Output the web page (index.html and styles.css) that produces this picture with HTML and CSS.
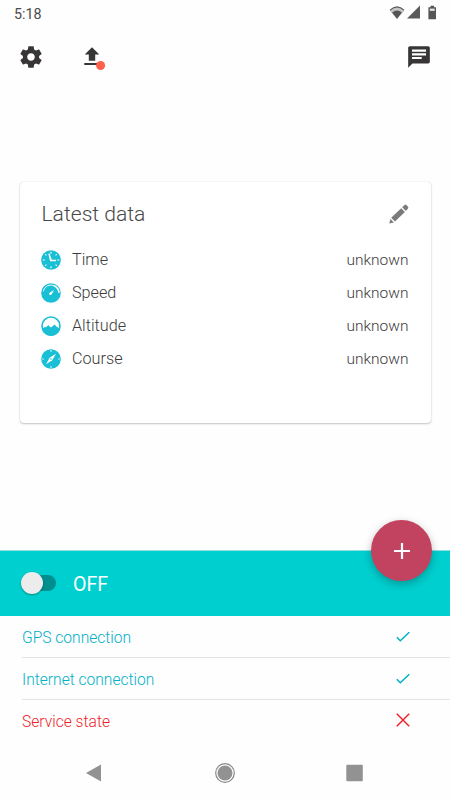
FILE: index.html
```html
<!DOCTYPE html>
<html lang="en">
<head>
<meta charset="utf-8">
<meta name="viewport" content="width=device-width, initial-scale=1">
<title>Tracker</title>
<link rel="stylesheet" href="styles.css">
</head>
<body>
<div class="screen">
  <header class="status">
    <span class="clock">5:18</span>
    <svg class="status-icons" width="50" height="16" viewBox="0 0 50 16">
      <path d="M.6 5.4Q8 -1.9 15.4 5.4L8 14.3Z" fill="#c4c4c4"/>
      <path d="M1 5.2Q8 -1.6 15 5.2" fill="none" stroke="#555" stroke-width="1.1"/>
      <path d="M3.1 7.4Q8 3.5 12.9 7.4L8 13.7Z" fill="#555"/>
      <path d="M18 13.4L31 .6V13.4Z" fill="#5a5a5a"/>
      <path d="M41.5 .8h3.6v1.5h1.9v11.9h-7.6V2.3h2.1z" fill="#555"/>
      <path d="M40.8 3.6h4.9v2.3h-4.9z" fill="#e4e4e4"/>
    </svg>
  </header>
  <nav class="toolbar">
    <svg class="gear" width="26" height="26" viewBox="0 0 24 24"><path fill="#373536" d="M19.43 12.98c.04-.32.07-.64.07-.98s-.03-.66-.07-.98l2.11-1.65c.19-.15.24-.42.12-.64l-2-3.46c-.12-.22-.39-.3-.61-.22l-2.49 1c-.52-.4-1.08-.73-1.69-.98l-.38-2.65C14.46 2.18 14.25 2 14 2h-4c-.25 0-.46.18-.49.42l-.38 2.65c-.61.25-1.17.59-1.69.98l-2.49-1c-.23-.09-.49 0-.61.22l-2 3.46c-.13.22-.07.49.12.64l2.11 1.65c-.04.32-.07.65-.07.98s.03.66.07.98l-2.11 1.65c-.19.15-.24.42-.12.64l2 3.46c.12.22.39.3.61.22l2.49-1c.52.4 1.08.73 1.69.98l.38 2.65c.03.24.24.42.49.42h4c.25 0 .46-.18.49-.42l.38-2.65c.61-.25 1.17-.59 1.69-.98l2.49 1c.23.09.49 0 .61-.22l2-3.46c.12-.22.07-.49-.12-.64l-2.11-1.65zM12 15.5c-1.93 0-3.5-1.57-3.5-3.5s1.57-3.5 3.5-3.5 3.5 1.57 3.5 3.5-1.57 3.5-3.5 3.5z"/></svg>
    <svg class="upload" width="24" height="26" viewBox="0 0 24 26"><path fill="#373536" d="M10 3.2l7.3 7.2h-4.1v6.4H6.8v-6.4H2.7zM2.3 19h15.4v2H2.3z"/><circle cx="18.6" cy="21.5" r="4.5" fill="#ff604c"/></svg>
    <svg class="chat" width="26" height="26" viewBox="0 0 24 24"><path fill="#373536" d="M20.400 2H3.600C2.700 2 2 2.700 2 3.600V22l4-4h14.400c.9 0 1.600-.7 1.600-1.600V3.600c0-.9-.7-1.600-1.600-1.600z"/><path fill="#fff" d="M5.500 5h13v2.100h-13zM5.500 8.500h13v2h-13zM5.500 11.900h9v2h-9z"/></svg>
  </nav>
  <section class="card">
    <div class="card-head">
      <h1>Latest data</h1>
      <svg width="20" height="20" viewBox="0 0 20 20" fill="#7b7b7b"><path d="M.3 19.500l1-4.600 3.600 3.600zM2.200 13.700L12.200 4.300l3.700 3.700-9.900 9.500zM13.200 3.300L15.500 1q.9-.8 1.800 0l1.700 1.700q.8.900 0 1.800L16.900 7z"/></svg>
    </div>
    <ul class="data">
      <li>
        <svg width="20" height="20" viewBox="0 0 20 20"><circle cx="10" cy="10" r="9.800" fill="#18bfd5"/><path d="M10 1.800v2M10 16.200v2M1.800 10h2M16.200 10h2M4.200 4.200l1.200 1.200M14.600 14.600l1.200 1.200M15.800 4.200l-1.200 1.200M5.400 14.600l-1.200 1.200" stroke="#fff" stroke-width="1.100"/><path d="M7.300 3.800L9.100 11.200H15V9.700H10.800L8.600 3.600Z" fill="#fff"/></svg>
        <span>Time</span><b>unknown</b>
      </li>
      <li>
        <svg width="20" height="20" viewBox="0 0 20 20"><circle cx="10" cy="10" r="9.800" fill="#18bfd5"/><path d="M2.200 8.400A8 8 0 0 1 13.500 2.800" fill="none" stroke="#fff" stroke-width=".9"/><path d="M13 2.800A8 8 0 0 1 18 9.800" fill="none" stroke="#fff" stroke-width="1.700"/><path d="M13 7L10.900 11.100A1.400 1.400 0 1 1 9 9.400Z" fill="#fff"/></svg>
        <span>Speed</span><b>unknown</b>
      </li>
      <li>
        <svg width="20" height="20" viewBox="0 0 20 20"><circle cx="10" cy="10" r="9" fill="#fff" stroke="#18bfd5" stroke-width="1.600"/><path d="M1 13L3.800 11l1.300.3L7.300 8.900l1.200 1.500L10 11.600 13.700 8.500l1.600 2 1 .4L19 13A9.300 9.300 0 0 1 1 13Z" fill="#18bfd5"/></svg>
        <span>Altitude</span><b>unknown</b>
      </li>
      <li>
        <svg width="20" height="20" viewBox="0 0 20 20"><circle cx="10" cy="10" r="9.800" fill="#18bfd5"/><path d="M10 1.200v1.500M10 17.300v1.500M1.200 10h1.500M17.300 10h1.500" stroke="#fff" stroke-width="1.100"/><path d="M15 4.800L11.200 11.300 5 15.300 8.600 8.700Z" fill="#fff"/><circle cx="10" cy="10" r=".8" fill="#18bfd5"/></svg>
        <span>Course</span><b>unknown</b>
      </li>
    </ul>
  </section>
  <section class="power">
    <span class="switch"></span>
    <span class="power-label">OFF</span>
    <button class="fab" aria-label="Add"><svg width="18" height="18" viewBox="0 0 18 18"><path d="M9 1v16M1 9h16" stroke="#fff" stroke-width="2.200"/></svg></button>
  </section>
  <ul class="states">
    <li><span>GPS connection</span><svg width="14" height="14" viewBox="0 0 14 14"><path d="M.8 7.300l3.500 3.500L13.300 2.200"/></svg></li>
    <li><span>Internet connection</span><svg width="14" height="14" viewBox="0 0 14 14"><path d="M.8 7.300l3.500 3.500L13.300 2.200"/></svg></li>
    <li class="bad"><span>Service state</span><svg width="14" height="14" viewBox="0 0 14 14"><path d="M.8.800l12.400 12.400M13.200.800L.8 13.200"/></svg></li>
  </ul>
  <footer class="navbar">
    <svg width="20" height="20" viewBox="0 0 20 20"><path d="M2 10L17 1.500V18.500Z" fill="#929292"/></svg>
    <svg width="20" height="20" viewBox="0 0 20 20"><circle cx="10" cy="10" r="9.300" fill="#fff" stroke="#888" stroke-width="1.200"/><circle cx="10" cy="10" r="7.500" fill="#929292"/></svg>
    <svg width="20" height="20" viewBox="0 0 20 20"><rect x="1.300" y="1.800" width="16.500" height="16.500" rx="1" fill="#929292"/></svg>
  </footer>
</div>
</body>
</html>
```
FILE: styles.css
```css
* { box-sizing: border-box; }
body { margin: 0; background: #fff; font-family: Roboto, "Liberation Sans", sans-serif; }
h1, ul { margin: 0; padding: 0; font-weight: 400; list-style: none; }
svg { display: block; flex: none; }
.screen { width: 450px; height: 800px; display: flex; flex-direction: column; background: #fefefe; overflow: hidden; }

.status { height: 28px; display: flex; justify-content: space-between; padding: 5px 11px 0 14px; }
.clock { font-size: 14.3px; line-height: 19px; color: #4c4c4c; }

.toolbar { height: 58px; display: flex; align-items: center; padding: 0 18px 0 17.5px; }
.upload { margin-left: 38.5px; }
.chat { margin-left: auto; }

.card { height: 241px; margin: 96px 19.5px 0; padding: 16px 22px; background: #fff; border-radius: 4px; box-shadow: 0 1px 2px rgba(0, 0, 0, .22), 0 0 1px rgba(0, 0, 0, .22); }
.card-head { display: flex; justify-content: space-between; align-items: center; height: 31px; margin-bottom: 14px; }
h1 { margin-top: -1px; font-size: 21.1px; font-weight: 300; color: #484848; }
.data li { height: 33px; display: flex; align-items: center; font-size: 16.2px; font-weight: 300; color: #3c3c3c; }
.data svg { position: relative; left: -.3px; }
.data span { margin-left: 10.5px; }
.data b { margin-left: auto; padding-top: 1px; font-size: 15.5px; font-weight: 300; }

.power { position: relative; height: 66px; margin-top: 127px; display: flex; align-items: center; padding-left: 22px; background: #00cfcf; box-shadow: inset 0 1px #8fe0e0; }
.switch { position: relative; width: 34px; height: 16px; border-radius: 8px; background: #008f8f; }
.switch::before { content: ""; position: absolute; left: -1px; top: -3px; width: 22px; height: 22px; border-radius: 50%; background: #ececec; box-shadow: 0 1px 2px rgba(0, 0, 0, .35); }
.power-label { margin-left: 17px; padding-top: 2px; font-size: 19.6px; color: #fff; }
.fab { position: absolute; right: 17.7px; top: -30px; width: 61px; height: 61px; padding: 0; border: 0; border-radius: 50%; background: #c2435f; display: grid; place-items: center; box-shadow: 0 3px 8px rgba(0, 0, 0, .28); }

.states { padding-left: 22px; }
.states li { height: 42px; display: flex; align-items: center; justify-content: space-between; padding-right: 40px; border-bottom: 1px solid #e3e3e3; font-size: 15.6px; font-weight: 300; color: #00b0c6; }
.states span { padding-top: 3px; }
.states svg { fill: none; stroke: currentColor; stroke-width: 1.5; }
.states .bad { height: 41px; color: #ee2329; border-color: transparent; }

.navbar { flex: 1; display: flex; justify-content: space-between; align-items: center; padding: 5px 85px 0 84px; }
```
